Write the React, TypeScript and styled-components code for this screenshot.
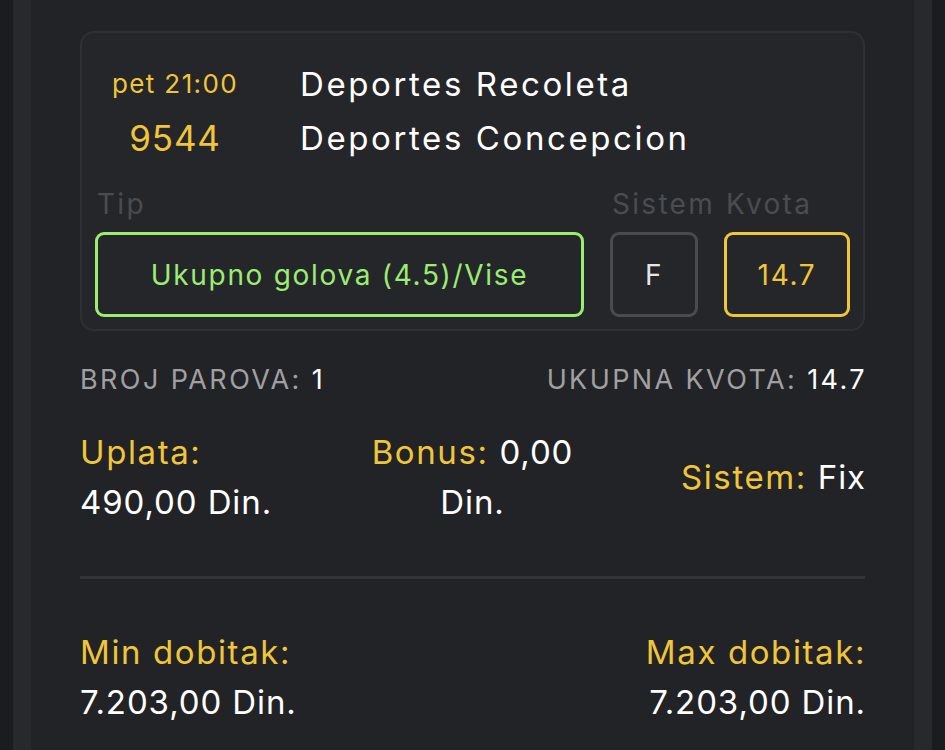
import React from "react";
import styled, { createGlobalStyle } from "styled-components";

const Global = createGlobalStyle`
  html, body { margin: 0; padding: 0; background: #1b1c1f; }
  body { font-family: Inter, "Open Sans", sans-serif; }
`;

const Outer = styled.div`
  padding: 0 13px;
  min-height: 750px;
  box-sizing: border-box;
  background: #1b1c1f;
`;

const Rail = styled.div`
  background: #28292c;
  padding: 0 18px;
  min-height: 750px;
`;

const Panel = styled.div`
  background: #222326;
  padding: 31px 49px 40px;
  min-height: 750px;
  box-sizing: border-box;
`;

const Card = styled.div`
  border: 2px solid #2f3034;
  border-radius: 14px;
  background: #252629;
  padding: 24px 13px 12px;
`;

const Match = styled.div`
  display: flex;
  gap: 45px;
`;

const TimeCol = styled.div`
  width: 160px;
  display: flex;
  flex-direction: column;
  align-items: center;
  color: #f0c53a;
`;

const TimeLine = styled.div<{ $size: number; $spacing: number }>`
  height: 54px;
  line-height: 54px;
  font-size: ${(p) => p.$size}px;
  letter-spacing: ${(p) => p.$spacing}px;
  white-space: nowrap;
`;

const TeamCol = styled.div`
  display: flex;
  flex-direction: column;
  color: #ffffff;
`;

const Team = styled.div`
  height: 54px;
  line-height: 54px;
  font-size: 33px;
  letter-spacing: 2.6px;
  white-space: nowrap;
`;

const PickGrid = styled.div`
  display: grid;
  grid-template-columns: 489px 88px 126px;
  column-gap: 26px;
  margin-top: 22px;
`;

const Label = styled.div`
  font-size: 28px;
  line-height: 34px;
  letter-spacing: 2.3px;
  color: #4b4c50;
  white-space: nowrap;
  padding-left: 2px;
  margin-bottom: 11px;
`;

const PickBox = styled.div<{ $color: string; $text: string }>`
  height: 85px;
  box-sizing: border-box;
  border: 3px solid ${(p) => p.$color};
  border-radius: 9px;
  display: flex;
  align-items: center;
  justify-content: center;
  color: ${(p) => p.$text};
  font-size: 28px;
  letter-spacing: 1.7px;
  white-space: nowrap;
`;

const CountRow = styled.div`
  display: flex;
  justify-content: space-between;
  margin-top: 32px;
  font-size: 27px;
  line-height: 34px;
  letter-spacing: 2.4px;
`;

const TrailFix = styled.span`
  margin-right: -2px;
`;

const Muted = styled.span`
  color: #a0a0a2;
`;

const White = styled.span`
  color: #ffffff;
`;

const Gold = styled.span`
  color: #f0c53a;
  letter-spacing: 1.6px;
`;

const Value = styled.span`
  color: #ffffff;
  letter-spacing: 0.9px;
`;

const Summary = styled.div`
  display: grid;
  grid-template-columns: 1fr 230px 1fr;
  margin-top: 30px;
  font-size: 33px;
  line-height: 50px;
`;

const Cell = styled.div<{ $align: "left" | "center" | "right" }>`
  text-align: ${(p) => p.$align};
  display: flex;
  flex-direction: column;
  justify-content: center;
  align-items: ${(p) =>
    p.$align === "left" ? "flex-start" : p.$align === "right" ? "flex-end" : "center"};
  margin-right: ${(p) => (p.$align === "right" ? "-1px" : "0")};
`;

const Divider = styled.hr`
  border: none;
  height: 3px;
  background: #333438;
  margin: 49px 0 48px;
`;

const Winnings = styled.div`
  display: flex;
  justify-content: space-between;
  font-size: 33px;
  line-height: 50px;
`;

const WinCol = styled.div<{ $right?: boolean }>`
  display: flex;
  flex-direction: column;
  align-items: ${(p) => (p.$right ? "flex-end" : "flex-start")};
  margin-right: ${(p) => (p.$right ? "-1px" : "0")};
`;

export default function App() {
  return (
    <>
      <Global />
      <Outer>
        <Rail>
          <Panel>
            <Card>
              <Match>
                <TimeCol>
                  <TimeLine $size={26} $spacing={1.4}>
                    pet 21:00
                  </TimeLine>
                  <TimeLine $size={35} $spacing={0.8}>
                    9544
                  </TimeLine>
                </TimeCol>
                <TeamCol>
                  <Team>Deportes Recoleta</Team>
                  <Team>Deportes Concepcion</Team>
                </TeamCol>
              </Match>
              <PickGrid>
                <Label>Tip</Label>
                <Label>Sistem</Label>
                <Label>Kvota</Label>
                <PickBox $color="#9bec72" $text="#9bec72">
                  Ukupno golova (4.5)/Vise
                </PickBox>
                <PickBox $color="#4a4b4f" $text="#e6e6e6">
                  F
                </PickBox>
                <PickBox $color="#f0c53a" $text="#f0c53a">
                  14.7
                </PickBox>
              </PickGrid>
            </Card>

            <CountRow>
              <span>
                <Muted>BROJ PAROVA: </Muted>
                <White>1</White>
              </span>
              <TrailFix>
                <Muted>UKUPNA KVOTA: </Muted>
                <White>14.7</White>
              </TrailFix>
            </CountRow>

            <Summary>
              <Cell $align="left">
                <Gold>Uplata:</Gold>
                <Value>490,00 Din.</Value>
              </Cell>
              <Cell $align="center">
                <div>
                  <Gold>Bonus: </Gold>
                  <Value>0,00</Value>
                </div>
                <Value>Din.</Value>
              </Cell>
              <Cell $align="right">
                <div>
                  <Gold>Sistem: </Gold>
                  <Value>Fix</Value>
                </div>
              </Cell>
            </Summary>

            <Divider />

            <Winnings>
              <WinCol>
                <Gold>Min dobitak:</Gold>
                <Value>7.203,00 Din.</Value>
              </WinCol>
              <WinCol $right>
                <Gold>Max dobitak:</Gold>
                <Value>7.203,00 Din.</Value>
              </WinCol>
            </Winnings>
          </Panel>
        </Rail>
      </Outer>
    </>
  );
}
